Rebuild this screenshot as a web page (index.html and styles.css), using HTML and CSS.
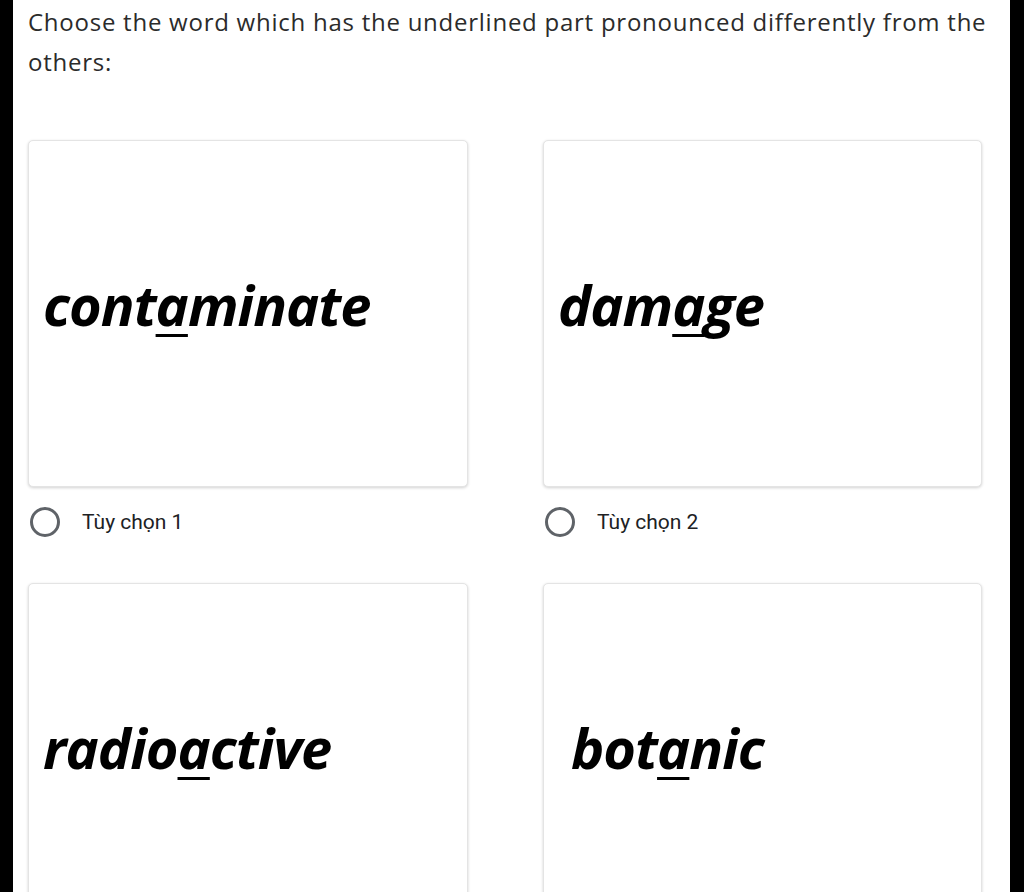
FILE: index.html
```html
<!DOCTYPE html>
<html lang="vi">
<head>
    <meta charset="UTF-8">
    <meta name="viewport" content="width=device-width, initial-scale=1.0">
    <title>Quiz</title>
    <link rel="stylesheet" href="styles.css">
</head>
<body>
    <main class="page">
        <h1 class="question-title">Choose the word which has the underlined part pronounced differently from the others:</h1>

        <div class="options">
            <div class="option">
                <div class="option-card">
                    <span class="word">cont<u>a</u>minate</span>
                </div>
                <label class="option-label">
                    <span class="radio"></span>
                    <span>Tùy chọn 1</span>
                </label>
            </div>

            <div class="option">
                <div class="option-card">
                    <span class="word">dam<u>a</u>ge</span>
                </div>
                <label class="option-label">
                    <span class="radio"></span>
                    <span>Tùy chọn 2</span>
                </label>
            </div>

            <div class="option">
                <div class="option-card">
                    <span class="word">radio<u>a</u>ctive</span>
                </div>
            </div>

            <div class="option">
                <div class="option-card option-card--wide">
                    <span class="word">bot<u>a</u>nic</span>
                </div>
            </div>
        </div>
    </main>
</body>
</html>
```

FILE: styles.css
```css
body {
    margin: 0;
    padding: 0;
    background-color: #000;
    overflow: hidden;
}

.page {
    margin: 0 14px 0 13px;
    padding: 0 15px;
    min-height: 892px;
    background-color: #fff;
}

.question-title {
    margin: 0;
    padding-top: 2px;
    font-family: "Open Sans", sans-serif;
    font-size: 24px;
    font-weight: 400;
    line-height: 40px;
    letter-spacing: 0.75px;
    color: #2b2b2b;
}

.options {
    display: grid;
    grid-template-columns: 440px 439px;
    column-gap: 75px;
    row-gap: 26px;
    margin-top: 58px;
}

.option-card {
    box-sizing: border-box;
    height: 347px;
    display: flex;
    align-items: center;
    padding-left: 14px;
    padding-bottom: 20px;
    background-color: #fff;
    border: 1px solid #e4e4e4;
    border-radius: 5px;
    box-shadow: 0 1px 3px rgba(0, 0, 0, 0.18);
}

.option-card--wide {
    padding-left: 27px;
}

.word {
    font-family: "Open Sans", sans-serif;
    font-size: 56px;
    font-weight: 700;
    font-style: italic;
    letter-spacing: -1px;
    color: #000;
}

.word u {
    text-decoration: underline;
    text-decoration-thickness: 3px;
    text-underline-offset: 8px;
    text-decoration-skip-ink: none;
}

.option-label {
    height: 70px;
    display: flex;
    align-items: center;
    gap: 22px;
    font-family: Roboto, sans-serif;
    font-size: 21px;
    color: #202124;
}

.radio {
    box-sizing: border-box;
    width: 30px;
    height: 30px;
    margin-left: 2px;
    border: 3px solid #5f6368;
    border-radius: 50%;
}
```
